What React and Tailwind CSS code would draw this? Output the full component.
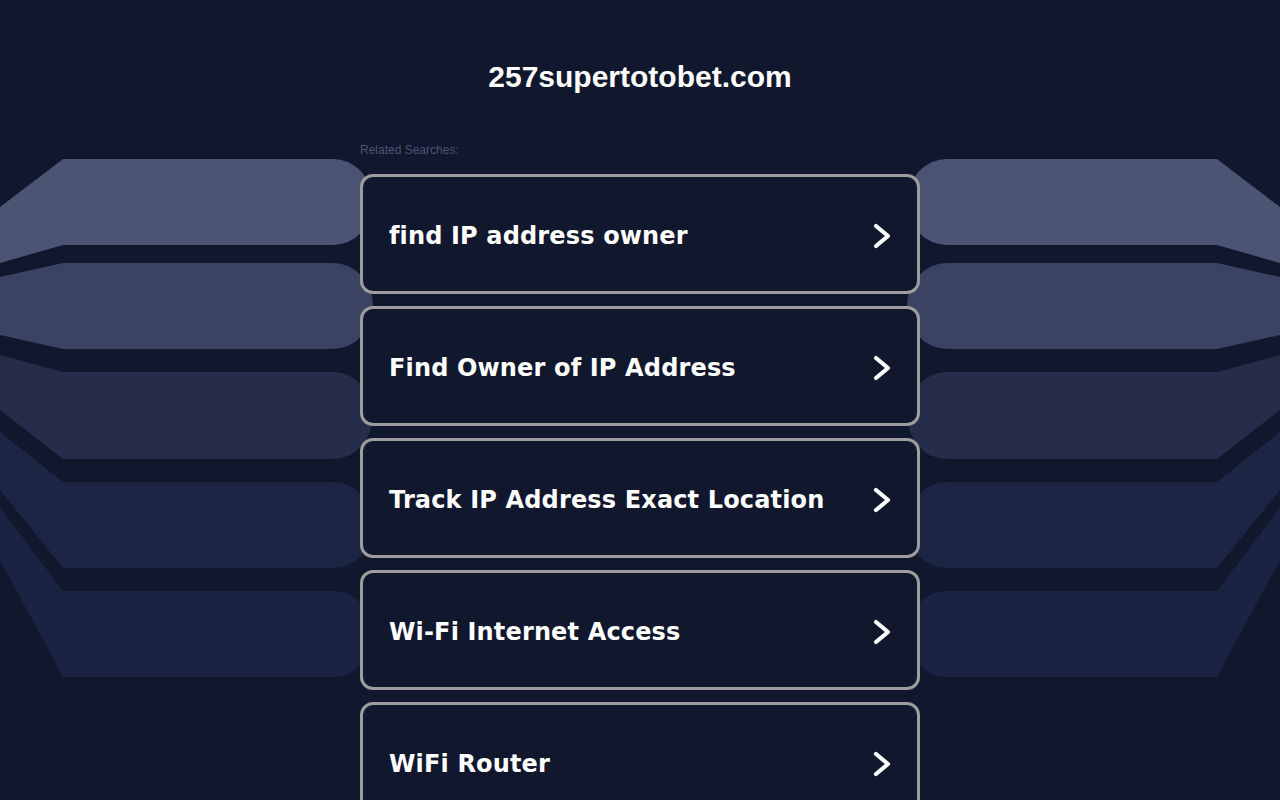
const searches = [
  "find IP address owner",
  "Find Owner of IP Address",
  "Track IP Address Exact Location",
  "Wi-Fi Internet Access",
  "WiFi Router",
];

// top, bottom, left-top y, left-bottom y, fill
const bands = [
  [159, 245, 207, 263, "#4b5472"],
  [263, 349, 277, 335, "#3a4361"],
  [372, 459, 355, 410, "#252d4b"],
  [482, 568, 432, 490, "#1c2544"],
  [591, 677, 507, 560, "#1a2342"],
];

const bandPath = ([t, b, lt, lb]) =>
  `M0,${lt} L63,${t} L333,${t} A40,${(b - t) / 2} 0 0 1 333,${b} L63,${b} L0,${lb} Z`;

const Backdrop = () => (
  <svg
    className="absolute inset-0 pointer-events-none"
    width="1280"
    height="800"
    viewBox="0 0 1280 800"
  >
    <g>
      {bands.map((band, i) => (
        <path key={`l${i}`} d={bandPath(band)} fill={band[4]} />
      ))}
    </g>
    <g transform="translate(1280,0) scale(-1,1)">
      {bands.map((band, i) => (
        <path key={`r${i}`} d={bandPath(band)} fill={band[4]} />
      ))}
    </g>
  </svg>
);

const Chevron = () => (
  <svg width="18" height="26" viewBox="0 0 18 26" fill="none">
    <path
      d="M3 3 L15 13 L3 23"
      stroke="#ffffff"
      strokeWidth="4.2"
      strokeLinecap="round"
      strokeLinejoin="round"
    />
  </svg>
);

const App = () => {
  return (
    <div className="relative w-full h-[800px] overflow-hidden bg-[#11172d]">
      <Backdrop />
      <div className="relative w-[560px] mx-auto">
        <h1 className="pt-[59px] text-center text-[30px] leading-[36px] font-bold text-white font-['Liberation_Sans',Arial,sans-serif]">
          257supertotobet.com
        </h1>
        <div className="mt-[47px] text-[12px] leading-[16px] text-[#4b5472] font-['Liberation_Sans',Arial,sans-serif]">
          Related Searches:
        </div>
        <div className="mt-[16px] flex flex-col gap-[12px]">
          {searches.map((label) => (
            <a
              key={label}
              href="#"
              className="flex items-center justify-between h-[120px] pl-[26px] pr-[26px] pt-[3px] rounded-[13px] border-[3px] border-[#9d9d9d] bg-[#11172d] text-white"
            >
              <span className="text-[24px] font-bold tracking-[0.15px] font-['DejaVu_Sans',Verdana,sans-serif]">
                {label}
              </span>
              <Chevron />
            </a>
          ))}
        </div>
      </div>
    </div>
  );
};

export default App;
